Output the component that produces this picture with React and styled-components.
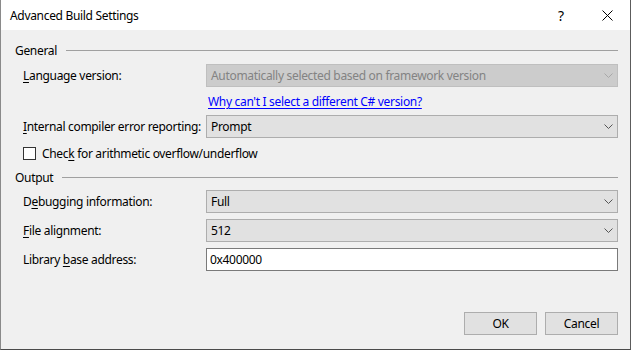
import React from "react";
import styled, { createGlobalStyle } from "styled-components";

const GlobalStyle = createGlobalStyle`
  html, body {
    margin: 0;
    padding: 0;
    background: #f0f0f0;
  }
  body {
    font-family: "Noto Sans", "Open Sans", sans-serif;
    font-size: 12px;
    letter-spacing: -0.32px;
    color: #000;
  }
  * {
    box-sizing: border-box;
  }
`;

const Window = styled.div`
  width: 631px;
  height: 350px;
  display: flex;
  flex-direction: column;
  border-left: 1px solid #8a8a8a;
  border-right: 1px solid #5c5c5c;
  border-bottom: 1px solid #4a4a4a;
  background: #f0f0f0;
`;

const TitleBar = styled.div`
  height: 30px;
  display: flex;
  align-items: center;
  background: #fff;
  padding-left: 9px;
`;

const Title = styled.div`
  flex: 1;
  font-size: 12px;
  letter-spacing: -0.32px;
`;

const CaptionButton = styled.div`
  width: 46px;
  height: 30px;
  display: flex;
  align-items: center;
  justify-content: center;
  font-size: 14px;
  color: #000;
`;

const Body = styled.div`
  flex: 1;
  display: flex;
  flex-direction: column;
  padding: 0 12px 14px 14px;
`;

const GroupHeader = styled.div`
  height: 16px;
  display: flex;
  align-items: center;
  gap: 9px;
  margin-top: ${(p) => p.$top}px;
`;

const GroupLine = styled.div`
  flex: 1;
  height: 1px;
  background: #a0a0a0;
`;

const Row = styled.div`
  display: grid;
  grid-template-columns: 183px 1fr;
  align-items: center;
  padding-left: 8px;
  min-height: ${(p) => (p.$short ? 16 : 23)}px;
  margin-top: ${(p) => p.$top}px;
`;

const Label = styled.div`
  white-space: nowrap;
`;

const Key = styled.span`
  text-decoration: underline;
  text-underline-offset: 2px;
`;

const Combo = styled.div`
  height: 23px;
  display: flex;
  align-items: center;
  justify-content: space-between;
  padding: 0 4px 0 4px;
  border: 1px solid ${(p) => (p.$disabled ? "#bfbfbf" : "#adadad")};
  background: ${(p) => (p.$disabled ? "#cccccc" : "#e1e1e1")};
  color: ${(p) => (p.$disabled ? "#838383" : "#000")};
`;

const TextBox = styled.div`
  height: 23px;
  display: flex;
  align-items: center;
  padding: 0 3px;
  border: 1px solid #7a7a7a;
  background: #fff;
`;

const LinkText = styled.a`
  grid-column: 2;
  padding-left: 2px;
  color: #0000ff;
  text-decoration: underline;
  text-underline-offset: 2px;
  white-space: nowrap;
`;

const CheckRow = styled.label`
  display: flex;
  align-items: center;
  gap: 6px;
  padding-left: 8px;
  height: 16px;
  margin-top: ${(p) => p.$top}px;
`;

const CheckBox = styled.span`
  width: 13px;
  height: 13px;
  border: 1px solid #333;
  background: #fff;
`;

const Footer = styled.div`
  margin-top: auto;
  display: flex;
  justify-content: flex-end;
  gap: 8px;
`;

const Button = styled.div`
  width: 73px;
  height: 23px;
  display: flex;
  align-items: center;
  justify-content: center;
  border: 1px solid #adadad;
  background: #e1e1e1;
`;

const Chevron = ({ disabled }) => (
  <svg width="9" height="5" viewBox="0 0 9 5">
    <polyline
      points="0.5,0.5 4.5,4.5 8.5,0.5"
      fill="none"
      stroke={disabled ? "#a8a8a8" : "#555"}
      strokeWidth="1"
    />
  </svg>
);

const CloseIcon = () => (
  <svg width="11" height="11" viewBox="0 0 11 11">
    <path d="M0.5 0.5 L10.5 10.5 M10.5 0.5 L0.5 10.5" stroke="#000" strokeWidth="1" />
  </svg>
);

const App = () => (
  <>
    <GlobalStyle />
    <Window>
      <TitleBar>
        <Title>Advanced Build Settings</Title>
        <CaptionButton>?</CaptionButton>
        <CaptionButton>
          <CloseIcon />
        </CaptionButton>
      </TitleBar>
      <Body>
        <GroupHeader $top={12}>
          <span>General</span>
          <GroupLine />
        </GroupHeader>
        <Row $top={6}>
          <Label>
            <Key>L</Key>anguage version:
          </Label>
          <Combo $disabled>
            <span>Automatically selected based on framework version</span>
            <Chevron disabled />
          </Combo>
        </Row>
        <Row $top={6} $short>
          <LinkText>Why can't I select a different C# version?</LinkText>
        </Row>
        <Row $top={5}>
          <Label>
            <Key>I</Key>nternal compiler error reporting:
          </Label>
          <Combo>
            <span>Prompt</span>
            <Chevron />
          </Combo>
        </Row>
        <CheckRow $top={7}>
          <CheckBox />
          <span>
            Chec<Key>k</Key> for arithmetic overflow/underflow
          </span>
        </CheckRow>
        <GroupHeader $top={8}>
          <span>Output</span>
          <GroupLine />
        </GroupHeader>
        <Row $top={5}>
          <Label>
            D<Key>e</Key>bugging information:
          </Label>
          <Combo>
            <span>Full</span>
            <Chevron />
          </Combo>
        </Row>
        <Row $top={6}>
          <Label>
            <Key>F</Key>ile alignment:
          </Label>
          <Combo>
            <span>512</span>
            <Chevron />
          </Combo>
        </Row>
        <Row $top={6}>
          <Label>
            Library <Key>b</Key>ase address:
          </Label>
          <TextBox>0x400000</TextBox>
        </Row>
        <Footer>
          <Button>OK</Button>
          <Button>Cancel</Button>
        </Footer>
      </Body>
    </Window>
  </>
);

export default App;
